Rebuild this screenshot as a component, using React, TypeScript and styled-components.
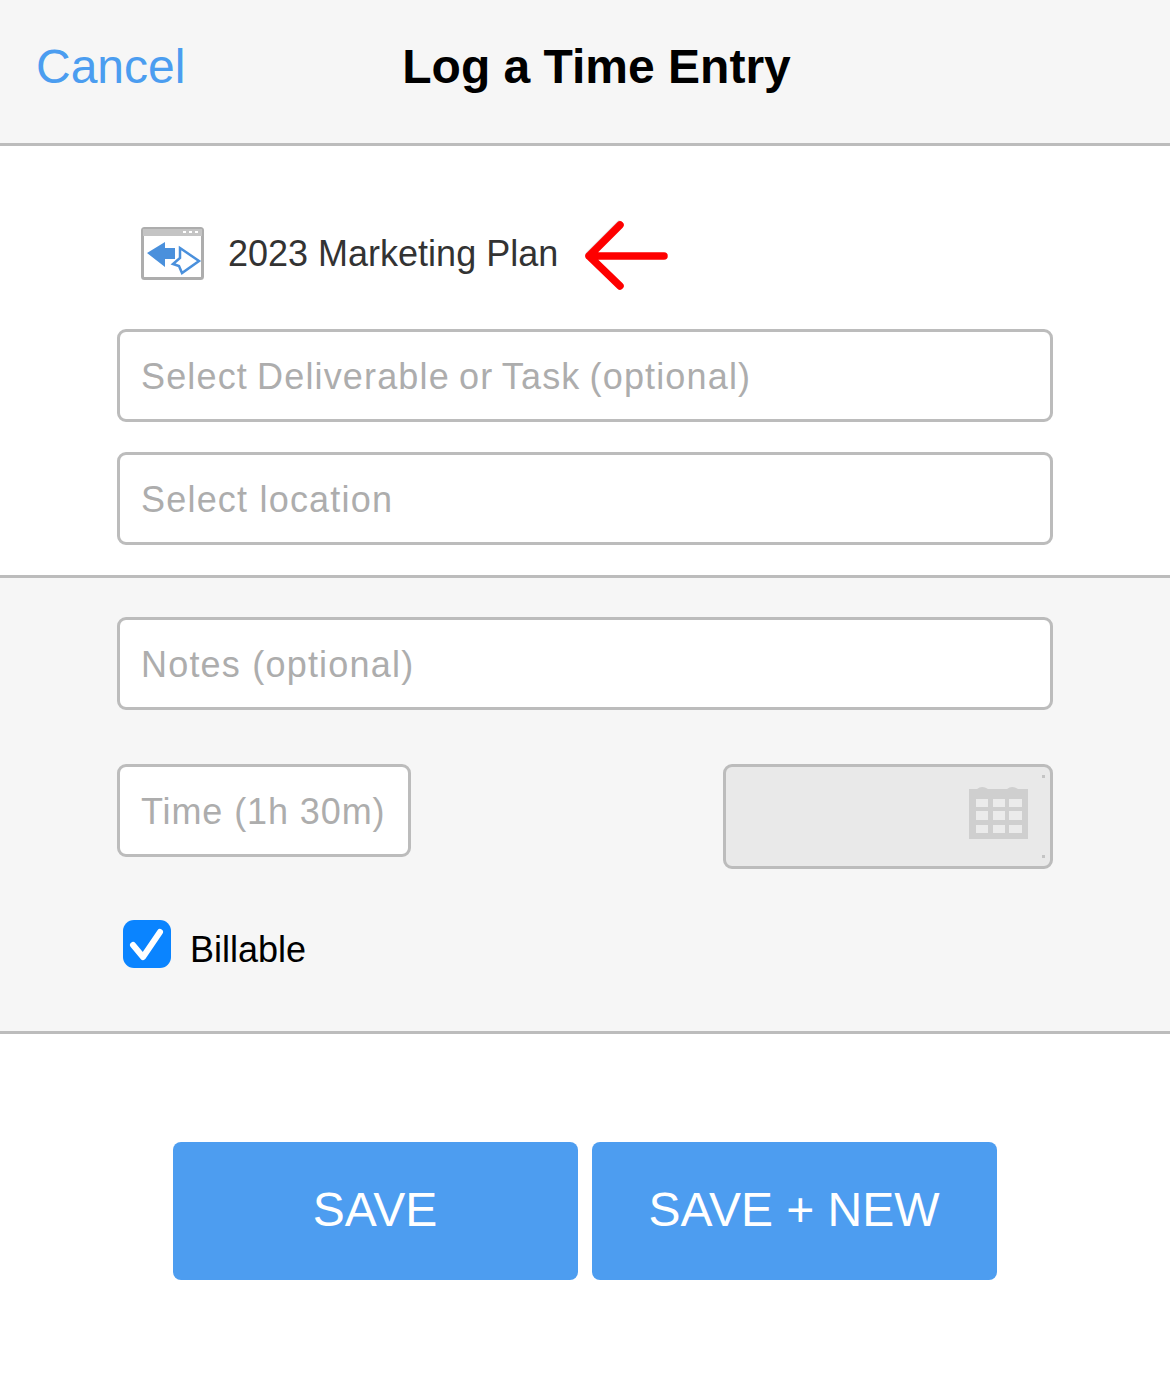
import React from "react"
import styled, { createGlobalStyle } from "styled-components"

const GlobalStyle = createGlobalStyle`
  html, body {
    margin: 0;
    padding: 0;
    background: #fff;
    font-family: "Liberation Sans", Arial, sans-serif;
  }
  * {
    box-sizing: border-box;
  }
`

const Page = styled.div`
  width: 1170px;
  height: 1385px;
  background: #fff;
  overflow: hidden;
`

const Header = styled.header`
  display: grid;
  grid-template-columns: 1fr auto 1fr;
  align-items: center;
  height: 146px;
  padding: 0 37px 10px 36px;
  background: #f6f6f6;
  border-bottom: 3px solid #bcbcbc;
`

const CancelLink = styled.a`
  font-size: 48px;
  color: #4b9df0;
`

const Title = styled.h1`
  margin: 0 0 0 24px;
  font-size: 48px;
  font-weight: 700;
  color: #000;
`

const TopSection = styled.section`
  display: flex;
  flex-direction: column;
  height: 432px;
  padding: 74px 117px 0;
  border-bottom: 3px solid #bcbcbc;
`

const ProjectRow = styled.div`
  display: flex;
  align-items: center;
  height: 70px;
  margin-bottom: 39px;
  padding-left: 24px;
`

const ProjectName = styled.span`
  margin: 0 27px 2px 24px;
  font-size: 36px;
  color: #333;
`

const Field = styled.input<{ $width?: number; $wordGap?: number; $tracking?: number }>`
  display: block;
  width: ${p => (p.$width ? `${p.$width}px` : "100%")};
  height: 93px;
  padding: 2px 21px 0;
  background: #fff;
  border: 3px solid #bcbcbc;
  border-radius: 9px;
  outline: none;
  font-family: inherit;
  font-size: 36px;
  letter-spacing: ${p => p.$tracking ?? 1.2}px;
  word-spacing: ${p => p.$wordGap ?? -2}px;
  color: #333;
  &::placeholder {
    color: #adadad;
    opacity: 1;
  }
`

const StackedField = styled(Field)`
  margin-bottom: 30px;
`

const DetailSection = styled.section`
  height: 456px;
  padding: 39px 117px 0;
  background: #f6f6f6;
  border-bottom: 3px solid #bcbcbc;
`

const TimeRow = styled.div`
  display: flex;
  justify-content: space-between;
  align-items: flex-start;
  margin-top: 54px;
`

const DateBox = styled.div`
  position: relative;
  display: flex;
  justify-content: flex-end;
  align-items: center;
  width: 330px;
  height: 105px;
  padding: 0 22px 8px 0;
  background: #e9e9e9;
  border: 3px solid #bcbcbc;
  border-radius: 9px;
`

const CornerDot = styled.span<{ $edge: "top" | "bottom" }>`
  position: absolute;
  right: 5px;
  ${p => p.$edge}: 8px;
  width: 3px;
  height: 3px;
  background: #c4c4c4;
`

const CheckRow = styled.label`
  display: flex;
  align-items: center;
  margin-top: 48px;
  padding-left: 6px;
  font-size: 36px;
  color: #000;
`

const CheckBox = styled.span`
  display: flex;
  align-items: center;
  justify-content: center;
  width: 48px;
  height: 48px;
  margin-right: 19px;
  background: #0a84ff;
  border-radius: 11px;
`

const CheckLabel = styled.span`
  margin-top: 12px;
`

const Footer = styled.footer`
  display: flex;
  justify-content: center;
  gap: 14px;
  padding-top: 108px;
`

const ActionButton = styled.button`
  width: 405px;
  height: 138px;
  padding: 0 1px 4px 0;
  border: none;
  border-radius: 8px;
  background: #4d9df0;
  font-family: inherit;
  font-size: 48px;
  color: #fff;
`

const SoftIcon = styled.svg`
  display: block;
  flex: none;
  filter: blur(0.7px);
`

const RaisedIcon = styled(SoftIcon)`
  margin-bottom: 4px;
`

const ProjectIcon = () => (
  <RaisedIcon width="63" height="53" viewBox="0 0 63 53">
    <rect x="1.5" y="1.5" width="60" height="50" rx="2" fill="#fff" stroke="#adadad" strokeWidth="3" />
    <rect x="2" y="2" width="59" height="7" fill="#c4c4c4" />
    <path d="M42 5h3M48 5h3M54 5h3" stroke="#fff" strokeWidth="2" />
    <path d="M6 26 L24 15 V21 H34 V32 H24 V40 Z" fill="#4a90dc" />
    <path
      d="M39 21 L58 34 L41 46 L38 39 L32 37 L39 31 Z"
      fill="none"
      stroke="#4a90dc"
      strokeWidth="2.5"
    />
  </RaisedIcon>
)

const RedArrow = () => (
  <SoftIcon width="84" height="72" viewBox="0 0 84 72">
    <path d="M34 4 L3 35" fill="none" stroke="#999" strokeWidth="5" strokeLinecap="round" opacity="0.3" />
    <path
      d="M35 6 L4 37 L35 67 M4 37 H79"
      fill="none"
      stroke="#fe0000"
      strokeWidth="7.5"
      strokeLinecap="round"
      strokeLinejoin="round"
    />
  </SoftIcon>
)

const CalendarIcon = () => (
  <SoftIcon width="59" height="53" viewBox="0 0 59 53">
    <path d="M0 3 H8 Q13 -1 19 3 H38 Q43 -1 49 3 H59 V53 H0 Z" fill="#cfcfcf" />
    <path
      d="M7 13h12v8H7zM24 13h12v8H24zM40 13h13v8H40zM7 25h12v9H7zM24 25h12v9H24zM40 25h13v9H40zM7 39h12v8H7zM24 39h12v8H24zM40 39h13v8H40z"
      fill="#ebebeb"
    />
  </SoftIcon>
)

const CheckMark = () => (
  <svg width="36" height="36" viewBox="0 0 36 36">
    <path
      d="M4 19 L14 31 L31 6"
      fill="none"
      stroke="#fff"
      strokeWidth="6"
      strokeLinecap="round"
      strokeLinejoin="round"
    />
  </svg>
)

export default function App() {
  return (
    <Page>
      <GlobalStyle />
      <Header>
        <CancelLink>Cancel</CancelLink>
        <Title>Log a Time Entry</Title>
        <span />
      </Header>
      <TopSection>
        <ProjectRow>
          <ProjectIcon />
          <ProjectName>2023 Marketing Plan</ProjectName>
          <RedArrow />
        </ProjectRow>
        <StackedField $tracking={1.15} placeholder="Select Deliverable or Task (optional)" />
        <Field $wordGap={0} placeholder="Select location" />
      </TopSection>
      <DetailSection>
        <Field $wordGap={0} placeholder="Notes (optional)" />
        <TimeRow>
          <Field $width={294} $wordGap={0} $tracking={0.9} placeholder="Time (1h 30m)" />
          <DateBox>
            <CornerDot $edge="top" />
            <CalendarIcon />
            <CornerDot $edge="bottom" />
          </DateBox>
        </TimeRow>
        <CheckRow>
          <CheckBox>
            <CheckMark />
          </CheckBox>
          <CheckLabel>Billable</CheckLabel>
        </CheckRow>
      </DetailSection>
      <Footer>
        <ActionButton>SAVE</ActionButton>
        <ActionButton>SAVE + NEW</ActionButton>
      </Footer>
    </Page>
  )
}
